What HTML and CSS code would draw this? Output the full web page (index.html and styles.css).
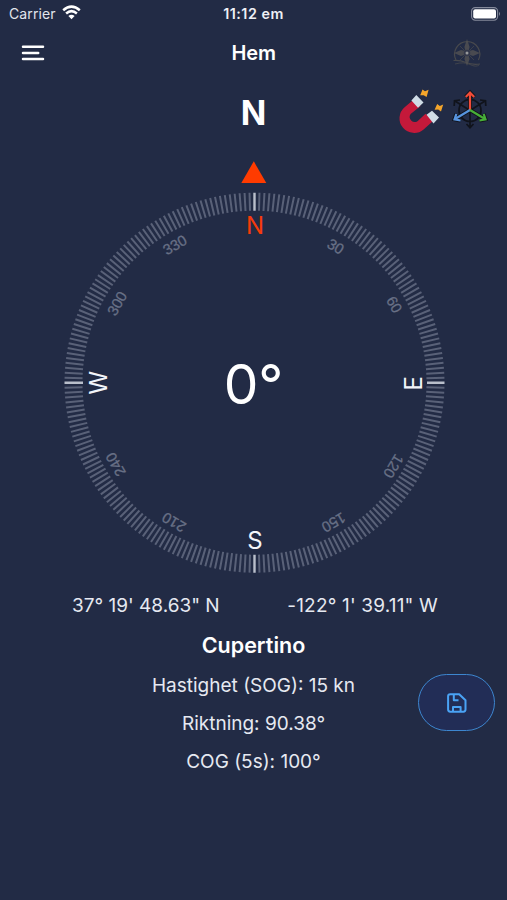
FILE: index.html
```html
<!DOCTYPE html>
<html lang="sv">
<head>
<meta charset="utf-8">
<title>Hem</title>
<link rel="stylesheet" href="styles.css">
</head>
<body>
<div class="status">
  <div class="carrier"><span>Carrier</span>
    <svg width="19" height="15" viewBox="0 0 19 15"><g fill="none" stroke="#fff" stroke-width="2.5"><path d="M1.2 5.3Q9.5-2 17.8 5.3"/><path d="M4.1 8.5Q9.5 3.8 14.9 8.5"/></g><path d="M6.4 11Q9.5 8.4 12.6 11L9.5 14.2Z" fill="#fff"/></svg>
  </div>
  <div class="clock">11:12 em</div>
  <svg class="battery" width="30" height="14" viewBox="0 0 30 14"><rect x=".6" y=".6" width="26" height="12.6" rx="3.6" fill="none" stroke="#858a9b" stroke-width="1.1"/><rect x="2.2" y="2.2" width="22.8" height="9.4" rx="2" fill="#fff"/><path d="M28 4.8q2 2 0 4.2z" fill="#858a9b"/></svg>
</div>
<header class="nav">
  <svg class="menu" width="24" height="17" viewBox="0 0 24 17"><path d="M2 1.8H22M2 8H17.2M2 14.1H22" stroke="#fff" stroke-width="2.5" stroke-linecap="round"/></svg>
  <h1 class="title">Hem</h1>
  <svg class="rose" width="30" height="30" viewBox="0 0 30 30"><g fill="none" stroke="#48494d" stroke-width="1.2"><path d="M4 22A12.6 12.6 0 1 1 26.4 22"/><path d="M1.5 22.5Q8 22 14 24.5T28 26"/><path d="M3 26Q12 23.5 18 26.5T27 27" stroke-width=".8"/><path d="M8 8L22 22M22 8L8 22" stroke-width=".7"/></g><path d="M15 1L17.6 9L16.6 13L21 12L28 15L21 18L16.5 16.5L17.6 21L15 28L12.4 21L13.5 16.5L9 18L2 15L9 12L13.4 13L12.4 9Z" fill="#505052" opacity=".85"/><circle cx="15" cy="15" r="3.2" fill="#33384a"/><circle cx="15" cy="15" r="1.5" fill="#98999b"/></svg>
</header>
<section class="heading">
  <div class="direction">N</div>
  <div class="tools">
    <svg width="46" height="46" viewBox="0 0 46 46"><path d="M15.5 10.7L6.6 18.2A14.2 14.2 0 0 0 25.6 40.4L35 32L27.5 24.8L19.5 32.2A5.1 5.1 0 0 1 12.6 25L22.6 17Z" fill="#c4193a"/><path d="M13.4 11.6L18.3 6L25.5 13.5L20 18.7ZM28.5 25.7L34 21.7L41 28.5L35.5 34.5Z" fill="#cfdce6"/><path d="M22.2 6.2L24.5 .4L27 2.2L30.6 .8L28.6 8L25.6 6.2ZM36.6 20.7L39.2 14.9L41.8 16.9L45.2 15.5L43 22.5L40.2 20.6Z" fill="#f4a52b"/></svg>
    <svg width="38" height="42" viewBox="0 0 38 42"><g fill="none" stroke="#10131b" stroke-width="1.7"><circle cx="19" cy="21.5" r="11"/><path d="M19 21.5V38M15.5 35L19 38.7L22.5 35M19 21.5L4 12M3.2 17L3.5 11.7L9 11M19 21.5L34 12M29 11L34.5 11.7L34.8 17"/></g><g fill="none" stroke="#10131b" stroke-width="4"><path d="M19 21V4M14.8 8L19 3.6L23.2 8"/><path d="M19 21L4 30M5.3 25L3.5 30.3L9.5 31.5"/><path d="M19 21L34 30M32.7 25L34.5 30.3L28.5 31.5"/></g><g fill="none" stroke-width="2.2"><path d="M19 21V4M14.8 8L19 3.6L23.2 8" stroke="#f04b38"/><path d="M19 21L4 30M5.3 25L3.5 30.3L9.5 31.5" stroke="#5794df"/><path d="M19 21L34 30M32.7 25L34.5 30.3L28.5 31.5" stroke="#47ae38"/></g></svg>
  </div>
</section>
<svg class="compass" width="400" height="424" viewBox="54 156 400 424">
  <path d="M253.8 161.3L266.3 183H241.3Z" fill="#ff3b00"/>
  <g transform="translate(254.5 382.7)">
    <path id="ticks" class="ticks"/>
    <path class="main-ticks" d="M0-190V-172M0 190V172M-190 0H-171.5M190 0H172.5"/>
    <g class="degrees">
      <text transform="rotate(30.8)" y="-153.5">30</text>
      <text transform="rotate(60.8)" y="-155">60</text>
      <text transform="rotate(121)" y="-157">120</text>
      <text transform="rotate(150.5)" y="-155.5">150</text>
      <text transform="rotate(210)" y="-156">210</text>
      <text transform="rotate(239.5)" y="-156">240</text>
      <text transform="rotate(300)" y="-153.5">300</text>
      <text transform="rotate(330)" y="-154">330</text>
    </g>
    <g class="points">
      <text class="north" x=".5" y="-149.2">N</text>
      <text transform="rotate(-90)" x="-.5" y="167.5">E</text>
      <text x=".5" y="166.5">S</text>
      <text transform="rotate(-90)" y="-148">W</text>
    </g>
    <text class="reading" x="-1" y="20.8">0°</text>
  </g>
</svg>
<div class="coords"><span class="lat">37° 19' 48.63" N</span><span class="lon">-122° 1' 39.11" W</span></div>
<main class="info">
  <div class="place">Cupertino</div>
  <div class="row">Hastighet (SOG): 15 kn</div>
  <div class="row">Riktning: 90.38°</div>
  <div class="row">COG (5s): 100°</div>
  <button class="save" aria-label="Spara"><svg width="20" height="20" viewBox="0 0 20 20" fill="none" stroke="#4aa3f5" stroke-width="2" stroke-linejoin="round"><path d="M3.2 1.2H12.2L18.5 7.2V16.6Q18.5 18.7 16.4 18.7H3.2Q1.1 18.7 1.1 16.6V3.3Q1.1 1.2 3.2 1.2ZM6.8 1.5V7.3H11.5M6 18.5V14H13.6V18.5"/></svg></button>
</main>
<script src="ticks.js"></script>
</body>
</html>
```
FILE: ticks.js
```js
// Draws one radial mark every 1.5 degrees, leaving the four cardinal marks out.
const COUNT = 240;
let d = "";
for (let i = 0; i < COUNT; i++) {
  if (i % (COUNT / 4) === 0) continue;
  const a = (i / COUNT) * 2 * Math.PI;
  const c = Math.cos(a), s = Math.sin(a);
  d += `M${(c * 172).toFixed(2)} ${(s * 172).toFixed(2)}L${(c * 190).toFixed(2)} ${(s * 190).toFixed(2)}`;
}
document.getElementById("ticks").setAttribute("d", d);
```
FILE: styles.css
```css
* { box-sizing: border-box; }
body {
  margin: 0;
  width: 507px;
  height: 900px;
  overflow: hidden;
  background: #222b45;
  color: #fff;
  font-family: Inter, "Liberation Sans", sans-serif;
}
svg { display: block; flex: none; overflow: visible; }
.status {
  display: grid;
  grid-template-columns: 1fr auto 1fr;
  align-items: center;
  height: 27px;
  padding: 0 6px 0 9px;
  font-size: 14px;
}
.carrier { display: flex; align-items: center; gap: 6px; color: #e2e5ec; letter-spacing: .1px; }
.carrier svg { margin-top: -2px; }
.clock { font-size: 14.3px; font-weight: 600; color: #eef0f5; letter-spacing: .5px; margin-right: 3px; }
.battery { justify-self: end; }
.nav {
  display: grid;
  grid-template-columns: 1fr auto 1fr;
  align-items: center;
  height: 52px;
  padding: 0 25px 0 20.5px;
}
.title { margin: 0 0 0 5px; font-size: 20px; font-weight: 600; line-height: 30px; }
.rose { justify-self: end; }
.heading {
  display: grid;
  grid-template-columns: 1fr auto 1fr;
  height: 77px;
  padding: 0 18px;
}
.direction { grid-column: 2; font-size: 33.5px; font-weight: 650; line-height: 69px; }
.tools { display: flex; justify-content: flex-end; gap: 7px; padding-top: 10px; }
.compass { margin-left: 54px; }
.compass text { text-anchor: middle; }
.ticks { fill: none; stroke: #596178; stroke-width: 2; }
.main-ticks { fill: none; stroke: #b9bfcb; stroke-width: 2.4; }
.degrees { fill: #687085; font-family: "Liberation Sans", Arial, sans-serif; font-size: 14.8px; stroke: #687085; stroke-width: .3; }
.points { fill: #f3f5fa; font-size: 24px; }
.points .north { fill: #f63b0b; }
.reading { fill: #fff; font-size: 55px; }
.coords {
  display: grid;
  grid-template-columns: auto auto;
  justify-content: space-between;
  padding: 13px 69px 0 72px;
  font-size: 19px;
  line-height: 26px;
  color: #e6e9f1;
}
.lon { letter-spacing: .18px; }
.info { position: relative; text-align: center; }
.place { padding-top: 13px; font-size: 21.5px; font-weight: 600; line-height: 26px; margin-bottom: 2px; }
.row { height: 38.2px; padding-top: 13px; font-size: 19px; line-height: 26px; color: #e6e9f1; }
.save {
  position: absolute;
  top: 55px;
  right: 12px;
  display: grid;
  place-items: center;
  width: 77px;
  height: 57px;
  padding: 0;
  border: 1.5px solid #3d86cf;
  border-radius: 29px;
  background: #222d56;
}
```
